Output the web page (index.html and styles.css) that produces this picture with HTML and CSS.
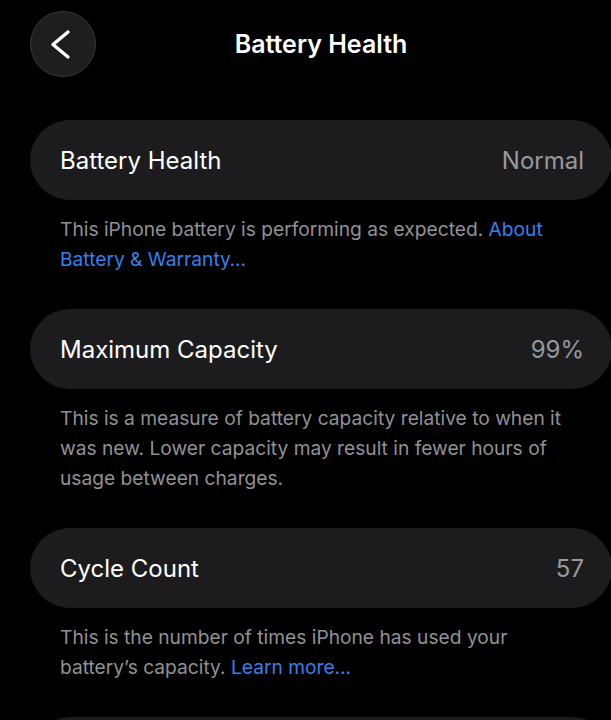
FILE: index.html
```html
<!DOCTYPE html>
<html lang="en">
<head>
  <meta charset="UTF-8" />
  <meta name="viewport" content="width=device-width, initial-scale=1.0" />
  <title>Battery Health</title>
  <link rel="stylesheet" href="styles.css">
</head>
<body>
  <div class="page">
    <div class="topbar">
      <button class="back-btn" aria-label="Back">
        <svg width="66" height="66" viewBox="0 0 66 66">
          <polyline points="38,21 23,33.5 38,46" fill="none" stroke="#fff" stroke-width="3.4" stroke-linecap="round" stroke-linejoin="round"/>
        </svg>
      </button>
      <h1 class="title">Battery Health</h1>
      <span></span>
    </div>

    <div class="card">
      <span class="label">Battery Health</span>
      <span class="value">Normal</span>
    </div>
    <p class="note">This iPhone battery is performing as expected. <a href="#">About Battery &amp; Warranty…</a></p>

    <div class="card">
      <span class="label">Maximum Capacity</span>
      <span class="value">99%</span>
    </div>
    <p class="note">This is a measure of battery capacity relative to when it was new. Lower capacity may result in fewer hours of usage between charges.</p>

    <div class="card">
      <span class="label">Cycle Count</span>
      <span class="value">57</span>
    </div>
    <p class="note">This is the number of times iPhone has used your battery’s capacity. <a href="#">Learn more…</a></p>

    <div class="card"></div>
  </div>
</body>
</html>
```

FILE: styles.css
```css
html, body {
  margin: 0;
  background-color: #000;
  overflow: hidden;
}
body {
  font-family: Inter, "Noto Sans", sans-serif;
  color: #fff;
  -webkit-font-smoothing: antialiased;
}
.page {
  width: 582px;
  padding: 11px 0 0 30px;
}
.topbar {
  display: grid;
  grid-template-columns: 66px 1fr 66px;
  align-items: center;
  height: 66px;
  margin-bottom: 43px;
}
.back-btn {
  width: 66px;
  height: 66px;
  padding: 0;
  border-radius: 50%;
  background-color: #1e1e1f;
  border: 1px solid #38383a;
  box-sizing: border-box;
  display: flex;
  align-items: center;
  justify-content: center;
  cursor: pointer;
}
.back-btn svg {
  display: block;
  flex: none;
}
.title {
  margin: 0;
  text-align: center;
  font-size: 25px;
  font-weight: 600;
}
.card {
  height: 80px;
  border-radius: 40px;
  background-color: #1c1c1e;
  display: flex;
  align-items: center;
  justify-content: space-between;
  padding: 0 28px 0 30px;
  font-size: 24px;
}
.value {
  color: #98989d;
}
.note {
  margin: 0;
  padding: 14px 30px 35px;
  font-size: 19.2px;
  line-height: 30px;
  color: #919196;
}
.note a {
  color: #3380ee;
  text-decoration: none;
}
```
